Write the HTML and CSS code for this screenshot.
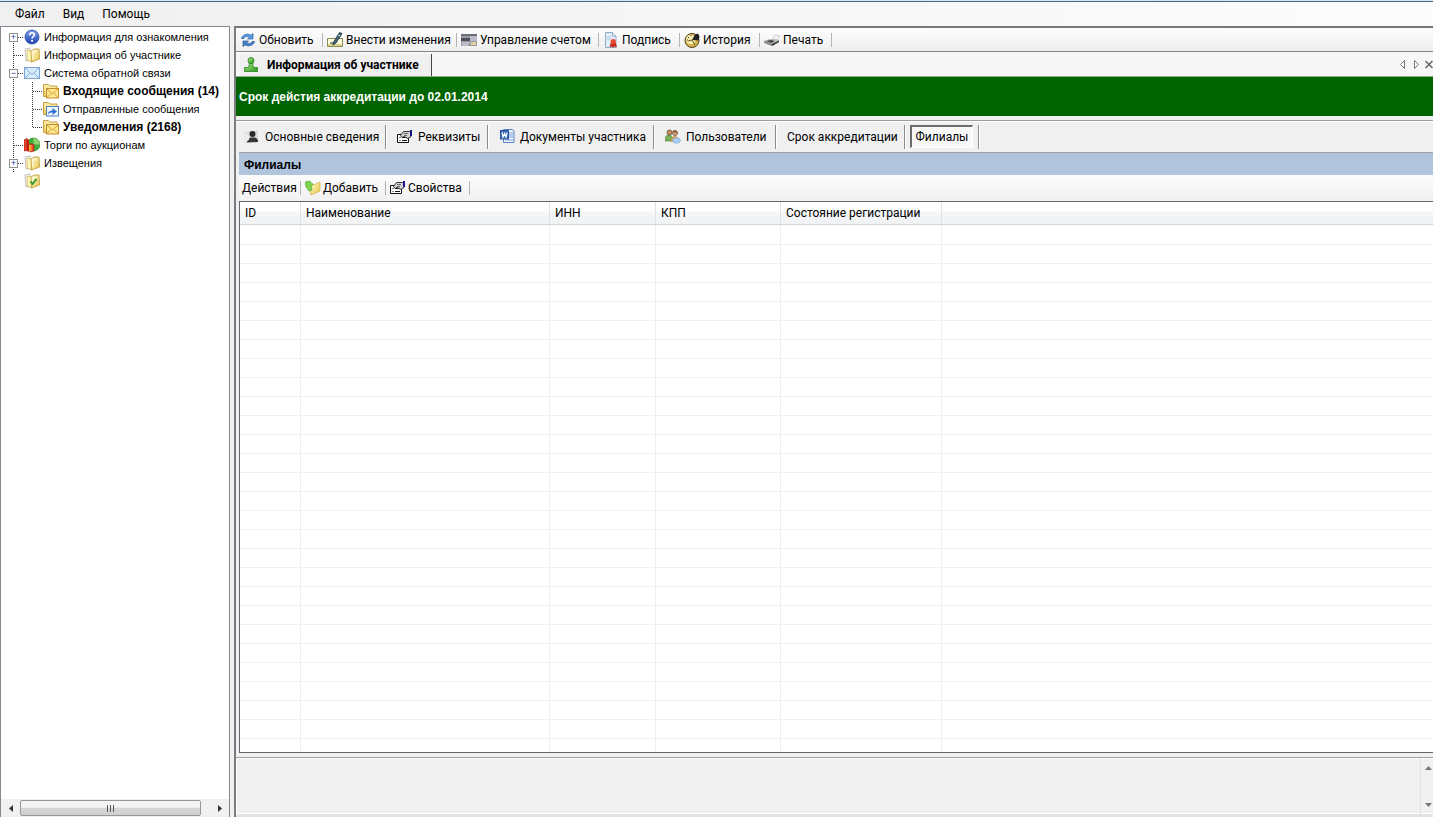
FILE: index.html
```
<!DOCTYPE html>
<html lang="ru">
<head>
<meta charset="utf-8">
<title>Информация об участнике</title>
<link rel="stylesheet" href="styles.css">
</head>
<body>
<svg class="defs" aria-hidden="true">
  <defs>
    <linearGradient id="gBlue" x1="0" y1="0" x2="0" y2="1"><stop offset="0" stop-color="#7fa4ee"/><stop offset="1" stop-color="#1b3fae"/></linearGradient>
    <linearGradient id="gFolder" x1="0" y1="0" x2="1" y2="1"><stop offset="0" stop-color="#fffbd0"/><stop offset="1" stop-color="#e8c648"/></linearGradient>
    <linearGradient id="gGreen" x1="0" y1="0" x2="1" y2="1"><stop offset="0" stop-color="#a9e88a"/><stop offset="1" stop-color="#2b9a1d"/></linearGradient>
    <symbol id="folder" viewBox="0 0 16 16">
      <path d="M1 2l5-1v12l-4 1z" fill="#fff" stroke="#a8a8a8" stroke-width=".7"/>
      <path d="M3 3l4 1 1 1v10l-5-2z" fill="#fff7b8" stroke="#c9ab4a" stroke-width=".7"/>
      <path d="M7 4l3-2h5l.5 10-8 3z" fill="url(#gFolder)" stroke="#b99532" stroke-width=".8"/>
      <path d="M9 5l4-1M9 4v8" stroke="#fffbe0" fill="none"/>
    </symbol>
    <symbol id="mailfolder" viewBox="0 0 16 16">
      <path d="M.5 13.500V1.500h5l1.500 1.500h7v3" fill="#fbe9a0" stroke="#c9a04a"/>
      <path d="M.5 4v9.500H4" fill="#f0cf68" stroke="#c9a04a"/>
      <rect x="3.500" y="5.500" width="12" height="9.500" fill="#ffe88c" stroke="#c08d30"/>
      <path d="M4 6l5.500 5L15 6M4 14.500l4-4M15 14.500l-4-4" fill="none" stroke="#cf9c3c"/>
    </symbol>
    <symbol id="props" viewBox="0 0 16 16">
      <path d="M.5 5.500h11v8H.5z" fill="#fff" stroke="#111"/>
      <path d="M2.500 8.500h1M5 8.500h5M2.500 11.500h1M5 11.500h5" stroke="#111"/>
      <path d="M3.500 6.500l3-4h6l1.500 1v4l-3 2-4-2-2 1z" fill="#d4d4d4" stroke="#222" stroke-width=".9"/>
      <path d="M7 4.500h4M7 6.500h3" stroke="#666"/>
      <path d="M13 1h2v6h-2z" fill="#151589"/>
    </symbol>
  </defs>
</svg>

<nav class="menu">
  <button>Файл</button><button>Вид</button><button>Помощь</button>
</nav>

<div class="work">
  <aside class="side">
    <ul class="tree">
      <li><div class="node"><button class="exp" aria-label="Развернуть">+</button><i class="stub"></i>
        <svg viewBox="0 0 16 16"><circle cx="8" cy="8" r="7" fill="url(#gBlue)" stroke="#2747a6" stroke-width=".8"/><path d="M5.700 6.200c0-3.200 4.700-3.200 4.700-.4 0 1.800-2.300 1.800-2.300 3.600" fill="none" stroke="#fff" stroke-width="1.700"/><circle cx="8.100" cy="11.800" r="1.100" fill="#fff"/></svg>
        <span>Информация для ознакомления</span></div></li>
      <li><div class="node leaf"><i class="stub"></i><svg><use href="#folder"/></svg><span>Информация об участнике</span></div></li>
      <li><div class="node"><button class="exp" aria-label="Свернуть">−</button><i class="stub"></i>
        <svg viewBox="0 0 16 16"><rect x=".5" y="2.500" width="15" height="11" fill="#d9ecfb" stroke="#7ca6cf"/><path d="M1 3l7 6.500L15 3M1 13l5-5M15 13l-5-5" fill="none" stroke="#85afd6"/></svg>
        <span>Система обратной связи</span></div>
        <ul class="branch">
          <li><div class="node leaf"><i class="stub"></i><svg><use href="#mailfolder"/></svg><b>Входящие сообщения (14)</b></div></li>
          <li><div class="node leaf"><i class="stub"></i>
            <svg viewBox="0 0 16 16"><path d="M.5 13.500V1.500h5l1.500 1.500h7v3" fill="#fbe9a0" stroke="#c9a04a"/><path d="M.5 4v9.500H4" fill="#f0cf68" stroke="#c9a04a"/><rect x="3.500" y="5.500" width="12" height="9.500" fill="#f1f7ff" stroke="#4f7fbd"/><path d="M5 13.500c0-3 2-4 4.500-4V7l4.500 3.500-4.500 3.500v-2.500c-2 0-3.500.5-4.500 2z" fill="#2f6fd0"/></svg>
            <span>Отправленные сообщения</span></div></li>
          <li><div class="node leaf"><i class="stub"></i><svg><use href="#mailfolder"/></svg><b>Уведомления (2168)</b></div></li>
        </ul></li>
      <li><div class="node leaf"><i class="stub"></i>
        <svg viewBox="0 0 16 16"><circle cx="9.500" cy="7.500" r="6.500" fill="#3fae3a" stroke="#1f7d24" stroke-width=".7"/><path d="M9.500 7.500V1a6.500 6.500 0 0 1 6.500 6.500z" fill="#8fd36f"/><path d="M0 3l3-1.500v12L0 14zM6 6.500l4 1v6.500l-4 1z" fill="#e8452c" stroke="#981a10" stroke-width=".6"/><path d="M3 1.500l2 1.500v12l-2-1z" fill="#c01f12"/><path d="M5 8h2.500v6H5z" fill="#f6a92c"/></svg>
        <span>Торги по аукционам</span></div></li>
      <li><div class="node"><button class="exp" aria-label="Развернуть">+</button><i class="stub"></i><svg><use href="#folder"/></svg><span>Извещения</span></div></li>
      <li><div class="node leaf"><i class="stub none"></i>
        <svg viewBox="0 0 16 16"><use href="#folder"/><path d="M6.500 8.500l2 2.500 4-5" fill="none" stroke="#2c9a2c" stroke-width="2"/></svg></div></li>
    </ul>
    <div class="hscroll">
      <button aria-label="Влево"><svg viewBox="0 0 4 7"><path d="M4 0v7L0 3.500z" fill="#333"/></svg></button>
      <div class="track"><div class="thumb"><i></i><i></i><i></i></div></div>
      <button aria-label="Вправо"><svg viewBox="0 0 4 7"><path d="M0 0v7l4-3.500z" fill="#333"/></svg></button>
    </div>
  </aside>

  <main class="main">
    <div class="bar">
      <button class="tool w-refresh"><svg viewBox="0 0 16 16"><path d="M1.500 6.500C2 2.500 8 1 11 3.200L13 1.500V7H7.500l2-1.800C7.500 4 4.500 4.300 4 6.500z" fill="#5d9be0" stroke="#2a61a8" stroke-width=".7"/><path d="M14.500 9.500C14 13.500 8 15 5 12.800L3 14.500V9h5.500l-2 1.800c2 1.200 5 .9 5.500-1.300z" fill="#4583cf" stroke="#24548f" stroke-width=".7"/></svg>Обновить</button>
      <button class="tool w-edit"><svg viewBox="0 0 16 16"><path d="M.5 6.500h15v8H.5z" fill="#fffce0" stroke="#8b8b55"/><path d="M1 12h14v2H1z" fill="#d8d48a"/><path d="M3 11h4" stroke="#333"/><path d="M6 11L12.500.5l2.500 1L9 11l-3 2z" fill="#446676" stroke="#1b2d38" stroke-width=".8"/><path d="M11 3l2 1" stroke="#cfe1ea"/></svg>Внести изменения</button>
      <button class="tool w-account"><svg viewBox="0 0 16 16"><rect y="2" width="16" height="12" fill="#9799a5"/><path d="M0 2h16v2H0z" fill="#6a6c78"/><path d="M0 6h9v3H0z" fill="#4d4f5c"/><path d="M9 4h7v5H9z" fill="#b9bbc8"/><path d="M1 11h8M1 13h6" stroke="#e1e1ea"/><path d="M10 10h5v3h-5z" fill="#e3d09c"/></svg>Управление счетом</button>
      <button class="tool w-sign"><svg viewBox="0 0 16 16"><path d="M2.500.5h7l3.500 3.500v11.500H2.500z" fill="#e3edf8" stroke="#8da9c9"/><path d="M9.500.5V4H13" fill="#fff" stroke="#8da9c9"/><path d="M4 5h4M4 7h4" stroke="#b4c9e0"/><path d="M8 10l-1.500 5.500 2-1 1.500 1 1.500-1 2.500 1L12.500 10z" fill="#c92a1a"/><circle cx="10.200" cy="9.500" r="2.600" fill="#e84a32"/></svg>Подпись</button>
      <button class="tool w-history"><svg viewBox="0 0 16 16"><circle cx="8" cy="8.500" r="7" fill="#d5b34b" stroke="#514015"/><circle cx="7" cy="7.500" r="4.800" fill="#fbf0b4"/><path d="M8 8l3-5.500 3-1 1.500 3-1 4z" fill="#222"/><path d="M4 9l4-1 3 5" fill="none" stroke="#6b5515"/><path d="M3 8h1M7 3v1M4 5l1 1" stroke="#333"/></svg>История</button>
      <button class="tool w-print"><svg viewBox="0 0 16 16"><path d="M8 8l3-5 5 1-4 6z" fill="#f5f5f5" stroke="#bbb" stroke-width=".7"/><path d="M0 9l7-2 8 1v2l-7 4-8-3z" fill="#888"/><path d="M0 9l7-2 8 1-7 4z" fill="#c2c2c2"/><path d="M2 9l5-1 4 1-4 2z" fill="#444"/><path d="M8 12l7-3v1l-7 4z" fill="#333"/></svg>Печать</button>
    </div>

    <div class="tabstrip">
      <button class="tab"><svg viewBox="0 0 16 16"><path d="M1.500 10.500h3c2-1 2-3 1.500-4.500h4c-.5 1.500-.5 3.500 1.500 4.500h3v4h-13z" fill="url(#gGreen)" stroke="#27801c" stroke-width=".8"/><circle cx="8" cy="3.500" r="3" fill="url(#gGreen)" stroke="#27801c" stroke-width=".8"/></svg><b>Информация об участнике</b></button>
      <div class="tabnav">
        <button aria-label="Назад"><svg viewBox="0 0 8 9"><path d="M5.500.5v8l-4-4z" fill="#fff" stroke="#777"/></svg></button>
        <button aria-label="Вперед"><svg viewBox="0 0 8 9"><path d="M2.500.5v8l4-4z" fill="#fff" stroke="#777"/></svg></button>
        <button aria-label="Закрыть"><svg viewBox="0 0 8 9"><path d="M.5 1l7 7M7.500 1l-7 7" stroke="#666" stroke-width="1.500"/></svg></button>
      </div>
    </div>

    <div class="notice">Срок дейстия аккредитации до 02.01.2014</div>

    <div class="content">
      <div class="pages">
        <div class="page p-main"><button><svg viewBox="0 0 16 16"><path d="M0 3l14-2v12l-13 1z" fill="#dcdcdc"/><circle cx="8.500" cy="5" r="3" fill="#2b2b2b"/><path d="M3 13.500c0-3 2-4.500 4.500-5h3c2 0 3.500 1.500 3.500 4.500z" fill="#333"/><path d="M1 4l4 2v5l-4 2z" fill="#ececec"/></svg>Основные сведения</button></div>
        <div class="page p-req"><button><svg><use href="#props"/></svg>Реквизиты</button></div>
        <div class="page p-docs"><button><svg viewBox="0 0 16 16"><path d="M4.500.5h9l1.500 1.500v11.500H4.500z" fill="#eef4ff" stroke="#5a82c2"/><path d="M10 4h4M10 6h4M10 8h4M6 11h8" stroke="#7b9fd6"/><rect x="1.500" y="1.500" width="8" height="8.500" fill="#3f6fbd" stroke="#2a5298"/><path d="M3 3.500l1 4.500L5.500 4.500 7 8l1-4.500" fill="none" stroke="#fff" stroke-width="1.200"/></svg>Документы участника</button></div>
        <div class="page p-users"><button><svg viewBox="0 0 16 16"><path d="M0 12c0-4 1-6 4-6s4 3 4 6z" fill="#7bb158" stroke="#4b7d32" stroke-width=".6"/><circle cx="4.500" cy="3.500" r="2.500" fill="#c98e62" stroke="#5a3c22" stroke-width=".7"/><path d="M6 13c0-4 1-6 4-6s4 3 4 6z" fill="#d2a058"/><circle cx="10" cy="4" r="2.500" fill="#d9a679" stroke="#5a3c22" stroke-width=".7"/><path d="M7.500 3c1-3 5-2 5 1z" fill="#8b5f3e"/><ellipse cx="11.500" cy="11.500" rx="3.800" ry="2.800" fill="#a9cdf0" stroke="#7ea9d2" stroke-width=".7"/></svg>Пользователи</button></div>
        <div class="page p-term"><button>Срок аккредитации</button></div>
        <div class="page p-branch"><button class="pressed" aria-pressed="true">Филиалы</button></div>
      </div>

      <h2 class="title">Филиалы</h2>

      <div class="bar actions">
        <button class="tool w-act">Действия</button>
        <button class="tool w-add"><svg viewBox="0 0 16 16"><path d="M4 5l4-1 1 1 6-3v9l-9 4z" fill="url(#gFolder)" stroke="#d0ac3c" stroke-width=".7"/><path d="M0 2l5-1 1 2 2 1-2 3 1 3-3 1-3-4z" fill="#7ed34f" stroke="#55b038" stroke-width=".7"/></svg>Добавить</button>
        <button class="tool w-props"><svg><use href="#props"/></svg>Свойства</button>
      </div>

      <div class="grid">
        <table>
          <colgroup><col class="c-id"><col class="c-name"><col class="c-inn"><col class="c-kpp"><col class="c-state"><col></colgroup>
          <thead><tr><th>ID</th><th>Наименование</th><th>ИНН</th><th>КПП</th><th>Состояние регистрации</th><th></th></tr></thead>
          <tbody id="rows"></tbody>
        </table>
      </div>
    </div>

    <div class="log">
      <div class="logbox"></div>
      <div class="vscroll">
        <button aria-label="Вверх"><svg viewBox="0 0 7 4"><path d="M0 4h7L3.500 0z" fill="#777"/></svg></button>
        <button aria-label="Вниз"><svg viewBox="0 0 7 4"><path d="M0 0h7L3.500 4z" fill="#777"/></svg></button>
      </div>
    </div>
  </main>
</div>
<script src="rows.js"></script>
</body>
</html>
```
FILE: styles.css
```
* { box-sizing: border-box; }
body {
  margin: 0;
  height: 100vh;
  display: flex;
  flex-direction: column;
  overflow: hidden;
  background: #f0f0f0;
  color: #000;
  font: 12px/16px Roboto, "Noto Sans", sans-serif;
}
button { margin: 0; padding: 0; border: 0; background: none; font: inherit; color: inherit; white-space: nowrap; }
svg { display: block; flex: none; width: 16px; height: 16px; }
.defs { position: absolute; width: 0; height: 0; }

.menu {
  flex: none;
  height: 26px;
  display: flex;
  align-items: center;
  gap: 18px;
  padding: 0 15px;
  border-top: 1px solid #d6e6f4;
  box-shadow: inset 0 1px #45688c;
  background: linear-gradient(90deg, #f0f0f0, #fcfcfc);
}

.work { flex: 1; min-height: 0; display: flex; gap: 4px; }

/* navigation tree */
.side {
  flex: none;
  width: 230px;
  display: flex;
  flex-direction: column;
  background: #fff;
  border: 1px solid #828790;
  border-bottom: 0;
  font: 11px/18px "Liberation Sans", Arial, sans-serif;
}
.tree, .branch { list-style: none; margin: 0; padding: 0; }
.tree {
  flex: 1;
  padding-top: 1px;
  background: repeating-linear-gradient(#333 0 1px, transparent 1px 2px) 12px 10px / 1px 136px no-repeat;
}
.branch {
  padding-left: 19px;
  background: repeating-linear-gradient(#333 0 1px, transparent 1px 2px) 31px 0 / 1px 46px no-repeat;
}
.node { display: flex; align-items: center; height: 18px; padding-left: 8px; white-space: nowrap; }
.leaf { padding-left: 13px; }
.exp {
  width: 9px;
  height: 9px;
  border: 1px solid #919191;
  background: #fff;
  color: #2b3c90;
  font-size: 9px;
  line-height: 7px;
}
.stub { width: 6px; height: 1px; background: repeating-linear-gradient(90deg, #333 0 1px, transparent 1px 2px); }
.leaf .stub { width: 10px; }
.stub.none { background: none; }
.node span, .node b { padding-left: 4px; }
.node b { font-size: 12px; }

.hscroll { flex: none; display: flex; height: 18px; padding: 1px 0 1px; background: #f0f0f0; }
.hscroll button { width: 19px; display: flex; align-items: center; justify-content: center; }
.hscroll button svg { width: 4px; height: 7px; }
.track { flex: 1; display: flex; }
.thumb {
  width: 95%;
  display: flex;
  align-items: center;
  justify-content: center;
  gap: 2px;
  border: 1px solid #979797;
  border-radius: 2px;
  background: linear-gradient(#f4f4f4 0 45%, #d6d6d6 50%, #cfcfcf);
}
.thumb i { width: 1px; height: 7px; background: #555; }

/* right-hand document area */
.main {
  flex: 1;
  min-width: 0;
  display: flex;
  flex-direction: column;
  border-left: 2px solid #7c7c80;
  border-top: 2px solid #77777a;
}
.bar {
  flex: none;
  display: flex;
  align-items: center;
  height: 24px;
  background: linear-gradient(#fdfdfd, #efefef);
  border-bottom: 1px solid #858585;
}
.tool {
  flex: none;
  display: flex;
  align-items: center;
  gap: 3px;
  height: 14px;
  padding-left: 4px;
  border-right: 1px solid #b4b4b4;
}
.w-refresh { width: 87px; }
.w-edit { width: 134px; }
.w-account { width: 142px; }
.w-sign { width: 81px; }
.w-history { width: 80px; }
.w-print { width: 72px; }

.tabstrip {
  flex: none;
  height: 25px;
  display: flex;
  justify-content: space-between;
  background: #f7f7f7;
  border-bottom: 1px solid #8fb08f;
}
.tab {
  display: flex;
  align-items: center;
  gap: 8px;
  width: 192px;
  height: 22px;
  margin: 2px 0 0 4px;
  padding-left: 3px;
  background: #f0f0f0;
  border-right: 1px solid #444;
}
.tabnav { display: flex; align-items: center; gap: 5px; }
.tabnav svg { width: 8px; height: 9px; }

.notice {
  flex: none;
  height: 39px;
  padding: 0 3px;
  background: #006400;
  color: #fff;
  font: bold 12px/40px "Liberation Sans", Arial, sans-serif;
}

.content {
  flex: 1;
  min-height: 0;
  margin-top: 4px;
  padding-left: 3px;
  display: flex;
  flex-direction: column;
  border-top: 1px solid #9c9c9c;
  box-shadow: inset 0 1px #fff;
}
.pages { flex: none; display: flex; align-items: center; height: 32px; border-bottom: 1px solid #a0a0a0; }
.page {
  flex: none;
  height: 24px;
  display: flex;
  align-items: center;
  padding-left: 11px;
  border-right: 1px solid #8c8c8c;
  box-shadow: 1px 0 #fff;
}
.page button { display: flex; align-items: center; gap: 5px; }
.p-main { width: 147px; padding-left: 5px; }
.p-req { width: 102px; }
.p-docs { width: 166px; }
.p-users { width: 122px; }
.p-term { width: 129px; }
.p-branch { width: 74px; padding-left: 5px; }
.page .pressed {
  width: 63px;
  height: 23px;
  justify-content: center;
  border: 1px solid #fff;
  border-top: 2px solid #6c6c6c;
  border-left: 2px solid #6c6c6c;
  background: #f8f8f8;
}

.title {
  flex: none;
  margin: 0;
  padding: 0 5px;
  height: 22px;
  background: #b0c4de;
  font: bold 12px/24px "Liberation Sans", Arial, sans-serif;
}
.actions { height: 26px; border-bottom: 0; background: linear-gradient(#fcfcfc, #f1f1f1); }
.actions .tool { gap: 2px; }
.actions .w-act { width: 62px; padding-left: 3px; }
.w-add { width: 85px; }
.w-props { width: 84px; }

.grid {
  flex: 1;
  min-height: 0;
  overflow: hidden;
  background: #fff;
  border: 1px solid #646770;
  border-right: 0;
}
table { width: 100%; table-layout: fixed; border-collapse: separate; border-spacing: 0; }
th {
  height: 23px;
  padding: 0 5px;
  text-align: left;
  font-weight: normal;
  background: linear-gradient(#fff 0 40%, #f5f6f8 45%, #f0f2f4);
  border-right: 1px solid #e0e2e5;
  border-bottom: 1px solid #d5d5d5;
}
td { height: 19px; padding: 0; border-right: 1px solid #ededed; border-bottom: 1px solid #f0f0f0; }
tbody tr:first-child td { height: 20px; }
th:last-child, td:last-child { border-right: 0; }
.c-id { width: 61px; }
.c-name { width: 249px; }
.c-inn { width: 106px; }
.c-kpp { width: 125px; }
.c-state { width: 161px; }

.log {
  flex: none;
  height: 60px;
  margin-top: 4px;
  display: flex;
  border-top: 1px solid #a0a0a0;
  border-bottom: 3px solid #e3e3e3;
  box-shadow: inset 1px 1px #fff, inset 0 -1px #fff;
}
.logbox { flex: 1; }
.vscroll {
  flex: none;
  width: 13px;
  padding: 8px 0 7px 4px;
  display: flex;
  flex-direction: column;
  justify-content: space-between;
  border-left: 1px solid #e2e2e2;
}
.vscroll svg { width: 7px; height: 4px; }
```
FILE: rows.js
```
// Fill the list with empty rows so that the grid lines reach its lower edge.
const body = document.getElementById('rows');
const count = Math.ceil(window.innerHeight / 19);
for (let i = 0; i < count; i++) {
  const row = body.insertRow();
  for (let c = 0; c < 6; c++) row.insertCell();
}
```
